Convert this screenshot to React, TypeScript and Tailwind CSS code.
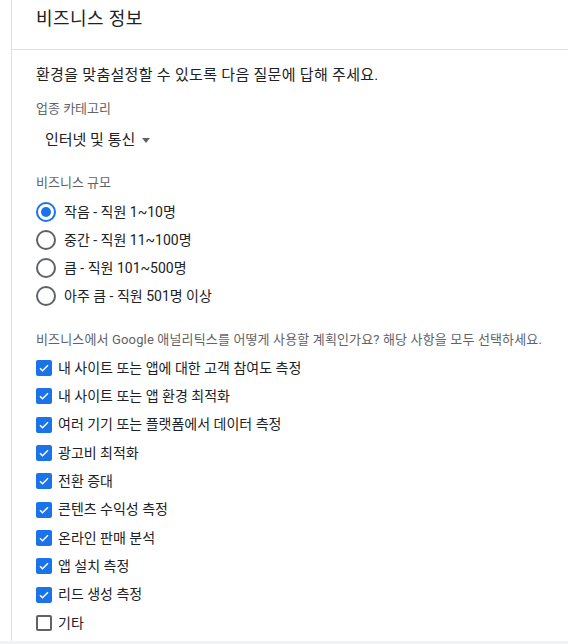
const sizes = ["작음 - 직원 1~10명", "중간 - 직원 11~100명", "큼 - 직원 101~500명", "아주 큼 - 직원 501명 이상"]

const uses = [
  { label: "내 사이트 또는 앱에 대한 고객 참여도 측정", checked: true },
  { label: "내 사이트 또는 앱 환경 최적화", checked: true },
  { label: "여러 기기 또는 플랫폼에서 데이터 측정", checked: true },
  { label: "광고비 최적화", checked: true },
  { label: "전환 증대", checked: true },
  { label: "콘텐츠 수익성 측정", checked: true },
  { label: "온라인 판매 분석", checked: true },
  { label: "앱 설치 측정", checked: true },
  { label: "리드 생성 측정", checked: true },
  { label: "기타", checked: false },
]

function Radio({ on }: { on: boolean }) {
  return (
    <span
      className={
        "flex h-[20px] w-[20px] shrink-0 items-center justify-center rounded-full border-2 " +
        (on ? "border-[#1a73e8]" : "border-[#5f6368]")
      }
    >
      {on && <span className="h-[10px] w-[10px] rounded-full bg-[#1a73e8]" />}
    </span>
  )
}

function Check({ on }: { on: boolean }) {
  if (!on) {
    return <span className="h-[16px] w-[16px] shrink-0 rounded-[2px] border-2 border-[#5f6368]" />
  }
  return (
    <span className="flex h-[16px] w-[16px] shrink-0 items-center justify-center rounded-[2px] bg-[#1a73e8]">
      <svg width="12" height="12" viewBox="0 0 24 24" fill="none" stroke="white" strokeWidth="3">
        <path d="M4 12.5l5 5L20 6.5" />
      </svg>
    </span>
  )
}

export default function App() {
  return (
    <div
      className="flex h-[644px] w-[568px] flex-col bg-white text-[#202124]"
      style={{ fontFamily: "Roboto, 'Noto Sans CJK KR', sans-serif" }}
    >
      <div className="ml-[11px] flex flex-1 flex-col border-l border-[#e0e0e0]">
        <div className="h-[50px] border-b border-[#e0e0e0] pl-[24px] pt-[7px] text-[18px] leading-[24px] tracking-[0.4px]">
          비즈니스 정보
        </div>
        <div className="flex flex-col pl-[24px] pt-[15px]">
          <p className="text-[15px] leading-[20px] tracking-[0.3px]">환경을 맞춤설정할 수 있도록 다음 질문에 답해 주세요.</p>
          <p className="mt-[16px] text-[13px] leading-[16px] text-[#5f6368]">업종 카테고리</p>
          <div className="mt-[12px] flex items-center gap-[6px] pl-[9px] text-[15px] leading-[22px]">
            인터넷 및 통신
            <svg width="10" height="5" viewBox="0 0 10 5">
              <path d="M1 0h8L5 5z" fill="#5f6368" />
            </svg>
          </div>
          <p className="mt-[24px] text-[13px] leading-[16px] text-[#5f6368]">비즈니스 규모</p>
          <div className="mt-[7px] flex flex-col">
            {sizes.map((s, i) => (
              <div key={s} className="flex h-[28px] items-center gap-[8px] text-[14px]">
                <Radio on={i === 0} />
                {s}
              </div>
            ))}
          </div>
          <p className="mt-[22px] text-[13px] leading-[16px] tracking-[0.15px] text-[#5f6368]">
            비즈니스에서 Google 애널리틱스를 어떻게 사용할 계획인가요? 해당 사항을 모두 선택하세요.
          </p>
          <div className="mt-[6px] flex flex-col">
            {uses.map((u) => (
              <div key={u.label} className="flex h-[28.33px] items-center gap-[6px] text-[14px]">
                <Check on={u.checked} />
                {u.label}
              </div>
            ))}
          </div>
        </div>
      </div>
      <div className="h-[3px] bg-[#f1f3f4]" />
    </div>
  )
}
